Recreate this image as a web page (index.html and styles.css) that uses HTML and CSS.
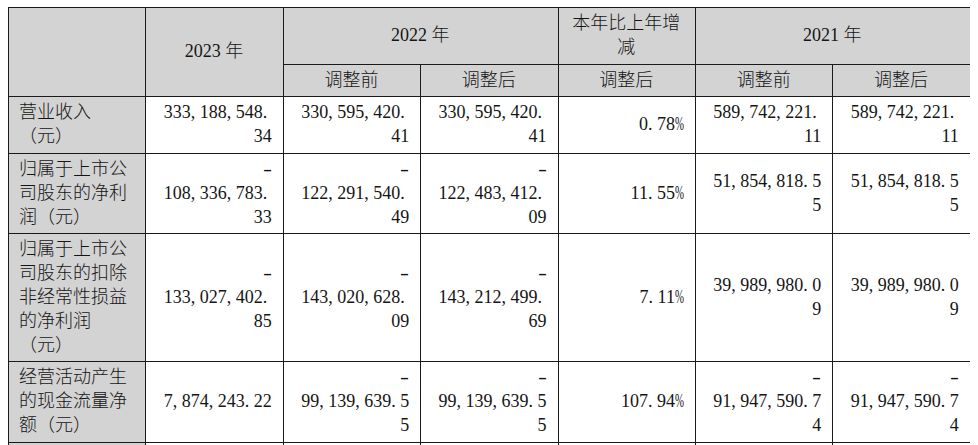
FILE: index.html
```html
<!DOCTYPE html>
<html lang="zh-CN">
<head>
<meta charset="utf-8">
<title>主要会计数据</title>
<link rel="stylesheet" href="styles.css">
</head>
<body>
<table class="fin">
  <colgroup>
    <col class="c"><col class="c"><col class="c"><col class="c"><col class="c"><col class="c"><col class="c">
  </colgroup>
  <thead>
    <tr class="h1">
      <th rowspan="2" class="hd"></th>
      <th rowspan="2" class="hd">2023 年</th>
      <th colspan="2" class="hd">2022 年</th>
      <th class="hd">本年比上年增<br>减</th>
      <th colspan="2" class="hd">2021 年</th>
    </tr>
    <tr class="h2">
      <th class="hd">调整前</th>
      <th class="hd">调整后</th>
      <th class="hd">调整后</th>
      <th class="hd">调整前</th>
      <th class="hd">调整后</th>
    </tr>
  </thead>
  <tbody>
    <tr>
      <th class="label">营业收入<br>（元）</th>
      <td class="num">333<i class="p">,</i>188<i class="p">,</i>548<i class="p">.</i><br>34</td>
      <td class="num">330<i class="p">,</i>595<i class="p">,</i>420<i class="p">.</i><br>41</td>
      <td class="num">330<i class="p">,</i>595<i class="p">,</i>420<i class="p">.</i><br>41</td>
      <td class="num">0<i class="p">.</i>78<i class="pc">%</i></td>
      <td class="num">589<i class="p">,</i>742<i class="p">,</i>221<i class="p">.</i><br>11</td>
      <td class="num">589<i class="p">,</i>742<i class="p">,</i>221<i class="p">.</i><br>11</td>
    </tr>
    <tr>
      <th class="label">归属于上市公<br>司股东的净利<br>润（元）</th>
      <td class="num"><i class="m">-</i><br>108<i class="p">,</i>336<i class="p">,</i>783<i class="p">.</i><br>33</td>
      <td class="num"><i class="m">-</i><br>122<i class="p">,</i>291<i class="p">,</i>540<i class="p">.</i><br>49</td>
      <td class="num"><i class="m">-</i><br>122<i class="p">,</i>483<i class="p">,</i>412<i class="p">.</i><br>09</td>
      <td class="num">11<i class="p">.</i>55<i class="pc">%</i></td>
      <td class="num">51<i class="p">,</i>854<i class="p">,</i>818<i class="p">.</i>5<br>5</td>
      <td class="num">51<i class="p">,</i>854<i class="p">,</i>818<i class="p">.</i>5<br>5</td>
    </tr>
    <tr>
      <th class="label">归属于上市公<br>司股东的扣除<br>非经常性损益<br>的净利润<br>（元）</th>
      <td class="num"><i class="m">-</i><br>133<i class="p">,</i>027<i class="p">,</i>402<i class="p">.</i><br>85</td>
      <td class="num"><i class="m">-</i><br>143<i class="p">,</i>020<i class="p">,</i>628<i class="p">.</i><br>09</td>
      <td class="num"><i class="m">-</i><br>143<i class="p">,</i>212<i class="p">,</i>499<i class="p">.</i><br>69</td>
      <td class="num">7<i class="p">.</i>11<i class="pc">%</i></td>
      <td class="num">39<i class="p">,</i>989<i class="p">,</i>980<i class="p">.</i>0<br>9</td>
      <td class="num">39<i class="p">,</i>989<i class="p">,</i>980<i class="p">.</i>0<br>9</td>
    </tr>
    <tr>
      <th class="label">经营活动产生<br>的现金流量净<br>额（元）</th>
      <td class="num">7<i class="p">,</i>874<i class="p">,</i>243<i class="p">.</i>22</td>
      <td class="num"><i class="m">-</i><br>99<i class="p">,</i>139<i class="p">,</i>639<i class="p">.</i>5<br>5</td>
      <td class="num"><i class="m">-</i><br>99<i class="p">,</i>139<i class="p">,</i>639<i class="p">.</i>5<br>5</td>
      <td class="num">107<i class="p">.</i>94<i class="pc">%</i></td>
      <td class="num"><i class="m">-</i><br>91<i class="p">,</i>947<i class="p">,</i>590<i class="p">.</i>7<br>4</td>
      <td class="num"><i class="m">-</i><br>91<i class="p">,</i>947<i class="p">,</i>590<i class="p">.</i>7<br>4</td>
    </tr>
    <tr class="cut">
      <th class="label"></th>
      <td class="num"></td><td class="num"></td><td class="num"></td>
      <td class="num"></td><td class="num"></td><td class="num"></td>
    </tr>
  </tbody>
</table>
</body>
</html>
```

FILE: styles.css
```css
html, body {
  overflow: hidden;
}
body {
  margin: 7px 8px 0 8px;
  background: #ffffff;
  color: #151515;
  font-family: "Liberation Serif", "Noto Sans CJK SC", serif;
  font-size: 18px;
}
.fin {
  border-collapse: collapse;
  table-layout: fixed;
  width: 962px;
}
.fin .c {
  width: 137.4px;
}
.fin th,
.fin td {
  border: 1px solid #1a1a1a;
  padding: 4px 11px 4px 10px;
  line-height: 23.8px;
  vertical-align: middle;
  white-space: nowrap;
  overflow: hidden;
}
.fin th {
  font-weight: 300;
}
.hd {
  background: #d3d3d3;
  text-align: center;
}
.label {
  background: #d3d3d3;
  text-align: left;
}
.num {
  background: #ffffff;
  text-align: right;
}
.fin i {
  font-style: normal;
}
.p {
  margin-right: 0.25em;
}
.pc {
  display: inline-block;
  width: 0.5em;
  transform: scaleX(0.6);
  transform-origin: left center;
  text-align: left;
}
.m {
  display: inline-block;
  transform: scaleX(1.5);
  transform-origin: right center;
}
.cut th,
.cut td {
  height: 48px;
}
```
